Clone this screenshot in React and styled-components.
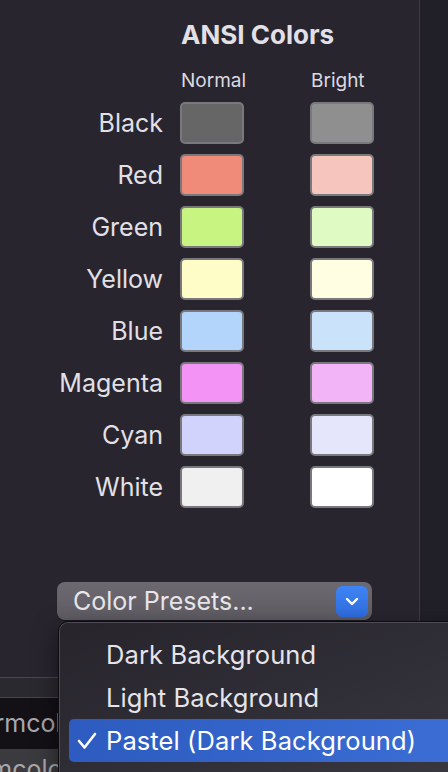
import React from 'react';
import styled, { createGlobalStyle } from 'styled-components';

const GlobalStyle = createGlobalStyle`
  html, body {
    margin: 0;
    padding: 0;
    background: #28252f;
  }
  body {
    font-family: Inter, "Open Sans", "Liberation Sans", sans-serif;
  }
`

const Screen = styled.div`
    position: relative;
    width: 448px;
    height: 772px;
    overflow: hidden;
    display: flex;
    flex-direction: column;
    background: #28252f;
    color: #dfdde3;
`
const Top = styled.div`
    display: flex;
    height: 677px;
    flex-shrink: 0;
`
const Panel = styled.div`
    width: 420px;
    box-sizing: border-box;
    border-right: 1px solid #3e3b45;
    padding-top: 20px;
    display: flex;
    flex-direction: column;
`
const Strip = styled.div`
    flex: 1;
    background: #211f28;
`
const Title = styled.h2`
    margin: 0 0 20px 181px;
    font-size: 26px;
    line-height: 30px;
    font-weight: 700;
    color: #e2e0e6;
`
const ColorGrid = styled.div`
    display: grid;
    grid-template-columns: 180px 130px 64px;
    grid-template-rows: 22px repeat(8, 42px);
    row-gap: 10px;
    .head {
        font-size: 19px;
        line-height: 22px;
        padding-left: 1px;
        color: #dcdae0;
    }
`
const Row = styled.div`
    display: contents;
`
const Label = styled.div`
    align-self: center;
    text-align: right;
    padding-right: 17px;
    font-size: 25px;
    line-height: 30px;
    color: #e2e0e6;
`
const Swatch = styled.div`
    width: 64px;
    height: 42px;
    box-sizing: border-box;
    border: 2px solid #79787d;
    border-radius: 5px;
    background: ${p => p.$color};
`
const PresetButton = styled.button`
    display: flex;
    align-items: center;
    justify-content: space-between;
    margin: 74px 0 0 57px;
    width: 315px;
    height: 38px;
    padding: 0 4px 0 16px;
    box-sizing: border-box;
    border: none;
    border-radius: 8px;
    background: linear-gradient(to bottom, #6c6970, #5f5c64);
    box-shadow: 0 1px 1px rgba(0, 0, 0, 0.35);
    color: #e8e6eb;
    font-family: inherit;
    font-size: 25px;
    line-height: 30px;
    .chev {
        display: flex;
        align-items: center;
        justify-content: center;
        width: 32px;
        height: 31px;
        border-radius: 6px;
        background: linear-gradient(to bottom, #3f84f4, #2f6ee0);
    }
`
const Band = styled.div`
    height: 19px;
    flex-shrink: 0;
    border-top: 1px solid #4a4750;
    border-bottom: 1px solid #46434c;
    background: #2b2930;
`
const ListRow = styled.div`
    height: ${p => p.$h}px;
    flex-shrink: 0;
    background: ${p => (p.$selected ? '#3b3a3e' : '#131116')};
    color: #a9a8ac;
    font-size: 25px;
    line-height: ${p => p.$h}px;
    white-space: nowrap;
    span {
        display: inline-block;
        margin-left: ${p => p.$shift}px;
    }
`
const Menu = styled.div`
    position: absolute;
    left: 58px;
    top: 621px;
    width: 460px;
    height: 200px;
    box-sizing: border-box;
    padding-top: 11px;
    border: 1px solid #0c0b0f;
    border-radius: 10px;
    background: linear-gradient(160deg, #27242c 0%, #2f2d35 45%, #3d3b43 100%);
    box-shadow: inset 0 0 0 1px #4f4c56, 0 8px 24px rgba(0, 0, 0, 0.5);
`
const MenuItem = styled.div`
    display: flex;
    align-items: center;
    height: 43px;
    margin-left: 10px;
    padding-left: 37px;
    position: relative;
    border-radius: 5px;
    font-size: 25.5px;
    letter-spacing: 0.1px;
    color: ${p => (p.$active ? '#ffffff' : '#e6e4e9')};
    background: ${p => (p.$active ? 'linear-gradient(to right, #2d5bbf, #3d70d8)' : 'transparent')};
    .check {
        position: absolute;
        left: 8px;
        top: 13px;
    }
`

const colors = [
    { name: 'Black', normal: '#666666', bright: '#8f8f8f' },
    { name: 'Red', normal: '#f08a79', bright: '#f6c6be' },
    { name: 'Green', normal: '#c8f582', bright: '#e0fac4' },
    { name: 'Yellow', normal: '#fffdc7', bright: '#fffde2' },
    { name: 'Blue', normal: '#b3d4fb', bright: '#cbe2fb' },
    { name: 'Magenta', normal: '#f293f5', bright: '#f3b4f7' },
    { name: 'Cyan', normal: '#d2d3fc', bright: '#e5e6fc' },
    { name: 'White', normal: '#f0f0f0', bright: '#ffffff' },
]

const presets = ['Dark Background', 'Light Background', 'Pastel (Dark Background)']

const App = () => {
    return (
        <Screen>
            <GlobalStyle />
            <Top>
                <Panel>
                    <Title>ANSI Colors</Title>
                    <ColorGrid>
                        <Row>
                            <div className='head'></div>
                            <div className='head'>Normal</div>
                            <div className='head'>Bright</div>
                        </Row>
                        {colors.map(c => (
                            <Row key={c.name}>
                                <Label>{c.name}</Label>
                                <Swatch $color={c.normal} />
                                <Swatch $color={c.bright} />
                            </Row>
                        ))}
                    </ColorGrid>
                    <PresetButton type='button'>
                        <span>Color Presets...</span>
                        <span className='chev'>
                            <svg width="14" height="9" viewBox="0 0 14 9">
                                <polyline points="2,2 7,7 12,2" fill="none" stroke="#fff" strokeWidth="2.4" strokeLinecap="round" strokeLinejoin="round" />
                            </svg>
                        </span>
                    </PresetButton>
                </Panel>
                <Strip />
            </Top>
            <Band />
            <ListRow $h={51} $shift={-28}><span>termcolors</span></ListRow>
            <ListRow $h={40} $shift={-42} $selected><span>termcolors</span></ListRow>
            <Menu>
                {presets.map((p, i) => (
                    <MenuItem key={p} $active={i === 2}>
                        {i === 2 && (
                            <svg className='check' width="20" height="18" viewBox="0 0 20 18">
                                <polyline points="2,9 7.5,15.5 18,2" fill="none" stroke="#fff" strokeWidth="2.6" strokeLinecap="round" strokeLinejoin="round" />
                            </svg>
                        )}
                        {p}
                    </MenuItem>
                ))}
            </Menu>
        </Screen>
    );
};

export default App;
